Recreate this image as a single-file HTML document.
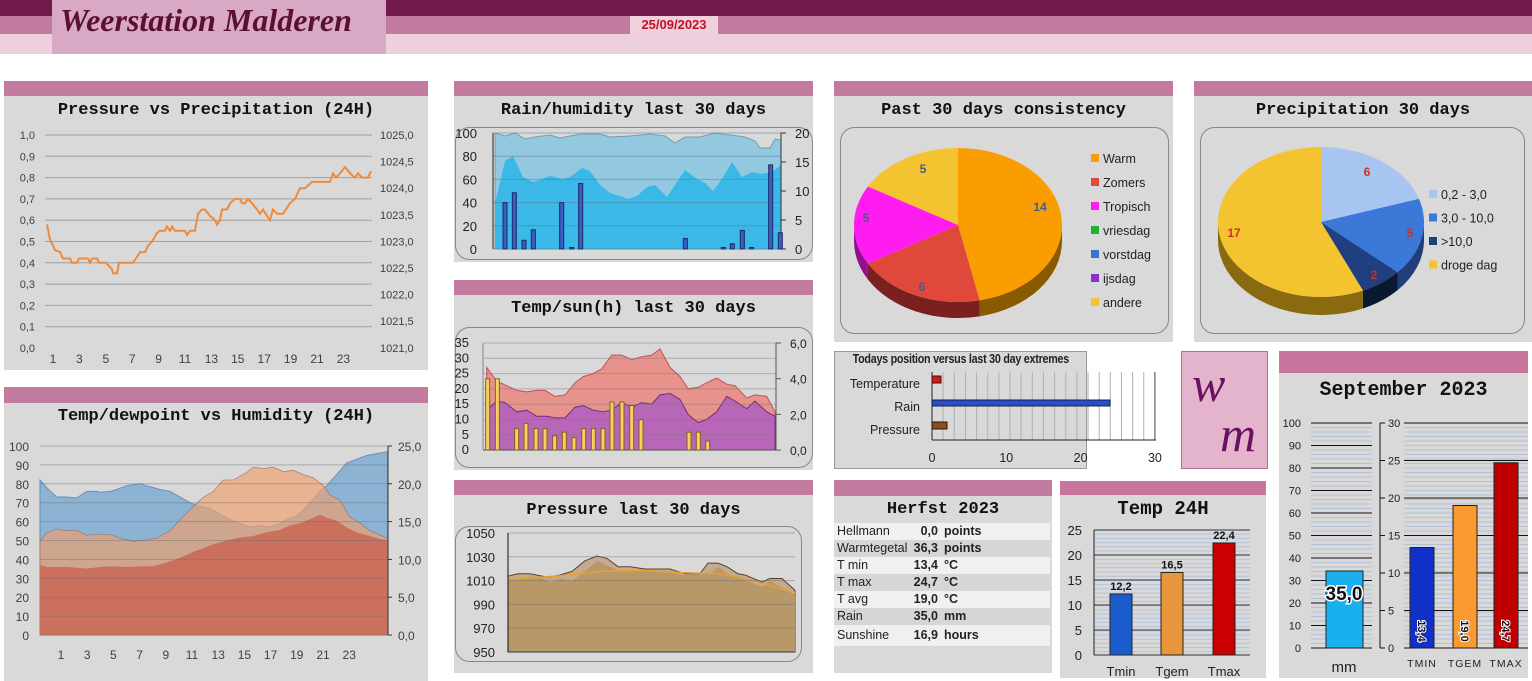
<!DOCTYPE html>
<html><head><meta charset="utf-8"><style>
*{margin:0;padding:0;box-sizing:border-box}
body{width:1532px;height:681px;background:#fff;position:relative;overflow:hidden;font-family:"Liberation Sans",sans-serif;color:#222}
.a{position:absolute}
.hd{position:absolute;background:#c27a9f}
.bd{position:absolute;background:#d9d9d9}
.t{position:absolute;font-family:"Liberation Mono",monospace;font-weight:bold;font-size:17px;text-align:center;color:#111}
svg{position:absolute;left:0;top:0}
svg text{font-family:"Liberation Sans",sans-serif}
</style></head><body>
<div class="a" style="left:0;top:0;width:1532px;height:16px;background:#731a4a"></div>
<div class="a" style="left:0;top:16px;width:1532px;height:18px;background:#c27a9f"></div>
<div class="a" style="left:0;top:34px;width:1532px;height:20px;background:#ecd0dd"></div>
<div class="a" style="left:52px;top:0;width:334px;height:54px;background:#d8a8c4"></div>
<div class="a" style="left:60px;top:2px;font-family:'Liberation Serif',serif;font-style:italic;font-weight:bold;font-size:32px;color:#5a1030">Weerstation Malderen</div>
<div class="a" style="left:630px;top:16px;width:88px;height:18px;background:#f0d0dc;color:#c0102a;font-weight:bold;font-size:13px;text-align:center;line-height:18px">25/09/2023</div>

<div class="hd" style="left:4px;top:81px;width:424px;height:15px"></div>
<div class="bd" style="left:4px;top:96px;width:424px;height:274px"></div>
<div class="t" style="left:4px;top:101px;width:424px">Pressure vs Precipitation (24H)</div>

<div class="hd" style="left:4px;top:387px;width:424px;height:16px"></div>
<div class="bd" style="left:4px;top:403px;width:424px;height:278px"></div>
<div class="t" style="left:4px;top:407px;width:424px">Temp/dewpoint vs Humidity (24H)</div>

<div class="hd" style="left:454px;top:81px;width:359px;height:15px"></div>
<div class="bd" style="left:454px;top:96px;width:359px;height:166px"></div>
<div class="t" style="left:454px;top:101px;width:359px">Rain/humidity last 30 days</div>

<div class="hd" style="left:454px;top:280px;width:359px;height:15px"></div>
<div class="bd" style="left:454px;top:295px;width:359px;height:175px"></div>
<div class="t" style="left:454px;top:299px;width:359px">Temp/sun(h) last 30 days</div>

<div class="hd" style="left:454px;top:480px;width:359px;height:15px"></div>
<div class="bd" style="left:454px;top:495px;width:359px;height:178px"></div>
<div class="t" style="left:454px;top:501px;width:359px">Pressure last 30 days</div>

<div class="hd" style="left:834px;top:81px;width:339px;height:15px"></div>
<div class="bd" style="left:834px;top:96px;width:339px;height:246px"></div>
<div class="t" style="left:834px;top:101px;width:339px">Past 30 days consistency</div>

<div class="hd" style="left:1194px;top:81px;width:338px;height:15px"></div>
<div class="bd" style="left:1194px;top:96px;width:338px;height:246px"></div>
<div class="t" style="left:1194px;top:101px;width:338px">Precipitation 30 days</div>

<div class="bd" style="left:834px;top:351px;width:253px;height:118px;border:1px solid #999"></div>
<div class="a" style="left:834px;top:352px;width:253px;text-align:center;font-weight:bold;font-size:12.5px;letter-spacing:-0.3px"><span style="display:inline-block;transform:scaleX(0.86)">Todays position versus last 30 day extremes</span></div>

<div class="a" style="left:1181px;top:351px;width:87px;height:118px;background:#e4b4cc;border:1px solid #b07090"></div>
<div class="a" style="left:1192px;top:355px;font-family:'Liberation Serif',serif;font-style:italic;font-size:50px;color:#6a1060">w</div>
<div class="a" style="left:1220px;top:405px;font-family:'Liberation Serif',serif;font-style:italic;font-size:50px;color:#6a1060">m</div>

<div class="hd" style="left:1279px;top:351px;width:249px;height:22px;background:#c9769e"></div>
<div class="bd" style="left:1279px;top:373px;width:249px;height:305px"></div>
<div class="t" style="left:1279px;top:379px;width:249px;font-size:20px">September 2023</div>

<div class="hd" style="left:834px;top:480px;width:218px;height:16px"></div>
<div class="bd" style="left:834px;top:496px;width:218px;height:177px"></div>
<div class="t" style="left:834px;top:500px;width:218px">Herfst 2023</div>

<div class="hd" style="left:1060px;top:481px;width:206px;height:14px;background:#c9769e"></div>
<div class="bd" style="left:1060px;top:495px;width:206px;height:183px"></div>
<div class="t" style="left:1060px;top:498px;width:206px;font-size:19px">Temp 24H</div>

<div id="herfst"></div>
<svg id="s" width="1532" height="681"></svg>
<script>
var S='';
function P(pts){return pts.map((p,i)=>(i?'L':'M')+p[0].toFixed(1)+','+p[1].toFixed(1)).join('')}
function A(pts,base){return P(pts)+'L'+pts[pts.length-1][0]+','+base+'L'+pts[0][0]+','+base+'Z'}
function T(x,y,s,o){o=o||{};S+=`<text x="${x}" y="${y}" font-size="${o.fs||11}" fill="${o.c||'#404040'}" text-anchor="${o.a||'start'}" ${o.w?'font-weight="bold"':''} ${o.x||''}>${s}</text>`}
function L(x1,y1,x2,y2,c,w){S+=`<line x1="${x1}" y1="${y1}" x2="${x2}" y2="${y2}" stroke="${c}" stroke-width="${w||1}"/>`}
function R(x,y,w,h,f,st){S+=`<rect x="${x}" y="${y}" width="${w}" height="${h}" fill="${f}" ${st?'stroke="'+st+'" stroke-width="1"':''}/>`}
// Pressure 24h
for(var i=0;i<=10;i++){var y=135+i*21.3;if(i<10)L(45,y,372,y,'#a0a0a0');T(35,y+4,(1-i/10).toFixed(1).replace('.',','),{a:'end'})}
for(var i=0;i<=8;i++){var y=135+i*26.6;T(380,y+4,(1025-i*0.5).toFixed(1).replace('.',','))}
for(var i=0;i<12;i++)T(53+i*26.4,363,2*i+1,{a:'middle',fs:12});
var pv=[[47,.58],[50,.51],[55,.46],[60,.45],[63,.42],[70,.42],[72,.40],[77,.40],[79,.42],[88,.42],[90,.40],[92,.42],[97,.42],[99,.40],[106,.40],[112,.37],[113,.35],[117,.35],[119,.40],[133,.40],[136,.42],[140,.45],[145,.45],[148,.48],[152,.50],[157,.54],[160,.55],[165,.55],[167,.57],[170,.55],[172,.57],[175,.55],[185,.55],[187,.53],[190,.55],[195,.55],[198,.63],[202,.65],[205,.65],[210,.62],[215,.60],[217,.58],[220,.60],[222,.65],[227,.65],[230,.68],[235,.70],[240,.70],[242,.68],[245,.68],[248,.70],[252,.68],[257,.65],[260,.63],[263,.65],[267,.62],[270,.60],[273,.65],[277,.63],[283,.63],[290,.68],[295,.70],[300,.75],[305,.75],[312,.78],[330,.78],[333,.82],[336,.80],[340,.82],[345,.85],[350,.82],[355,.80],[358,.82],[362,.80],[368,.80],[371,.83]];
S+=`<path d="${P(pv.map(p=>[p[0],348-p[1]*213]))}" fill="none" stroke="#ee8a3c" stroke-width="2"/>`;
// Temp/dew
var X=z=>z/3, HY=v=>635-v*1.89, TY=v=>635-v*7.56;
var hum=[[120,82],[140,78],[170,73],[200,73],[230,72.5],[260,76],[290,76],[300,75.5],[330,76],[350,77],[380,79],[420,80],[440,79],[460,78],[480,77],[510,76],[540,73],[570,70],[600,68],[630,67],[660,64],[690,61],[720,59],[750,57],[780,58],[800,57],[830,58],[860,61],[890,63],[910,66],[940,72],[960,76],[980,79],[1010,85],[1040,91],[1070,93],[1100,95],[1130,96],[1163,97]];
var tmp=[[120,12.4],[140,13.5],[170,14],[200,13.8],[230,13.8],[260,13.2],[290,13.3],[330,13.3],[360,12.8],[400,12.4],[430,12.5],[470,12.8],[510,13.8],[550,15.7],[580,17],[610,18.2],[640,19],[670,20.5],[700,20.5],[740,21.5],[760,22.2],[790,22],[820,22.2],[850,21.6],[880,21.8],[910,21.2],[940,20.8],[970,19.8],[990,18.5],[1020,17.8],[1050,15.6],[1080,14.8],[1110,13.8],[1140,13.2],[1163,12.8]];
var dew=[[120,9.3],[140,9],[200,9],[260,8.8],[300,9],[340,9.1],[380,9],[420,9.1],[460,9.1],[500,9.6],[540,10.2],[580,11],[610,11.5],[640,12],[680,12.5],[720,12.9],[760,13.1],[800,13.6],[840,13.9],[870,14.5],[900,14.8],[930,15.3],[960,15.9],[980,15.5],[1010,15.1],[1040,14.2],[1070,13.6],[1110,13.1],[1140,12.7],[1163,12.5]];
S+=`<path d="${A(hum.map(p=>[X(p[0]),HY(p[1])]),635)}" fill="#8cb2d4" stroke="#6a90b8"/>`;
S+=`<path d="${A(tmp.map(p=>[X(p[0]),TY(p[1])]),635)}" fill="rgba(238,160,110,0.68)" stroke="#a07060" stroke-width=".6"/>`;
S+=`<path d="${A(dew.map(p=>[X(p[0]),TY(p[1])]),635)}" fill="#cc705e"/>`;
for(var i=0;i<=10;i++){var y=446+i*18.9;L(40,y,388,y,'rgba(110,110,110,0.45)');T(29,y+5,100-i*10,{a:'end',fs:12})}
for(var i=0;i<=5;i++){var y=446+i*37.8;L(388,y,392,y,'#333');T(398,y+5,(25-i*5).toFixed(1).replace('.',','),{fs:12})}
L(388,446,388,635,'#333');
for(var i=0;i<12;i++)T(61+i*26.2,659,2*i+1,{a:'middle',fs:12});
// Rain/humidity box
S+=`<rect x="455.5" y="127.5" width="357" height="132" rx="14" fill="none" stroke="#888"/>`;
var rX=z=>450+z/3;
var hmax=[[495,133],[505,136],[515,133],[525,139],[535,137],[550,135],[560,138],[580,134],[600,134],[610,137],[630,136],[650,134],[665,136],[675,143],[685,137],[700,137],[715,133],[730,135],[745,137],[755,141],[760,148],[770,148],[775,139],[781,140]];
S+=`<path d="${A(hmax,249)}" fill="#92c9e0" stroke="#7a9aaa"/>`;
var hmin=[[495,203],[505,161],[513,156],[523,177],[533,182],[550,176],[563,179],[570,177],[582,168],[590,171],[600,185],[610,193],[620,196],[628,199],[637,196],[647,187],[655,185],[667,197],[685,170],[697,179],[705,183],[713,191],[722,179],[732,162],[742,177],[752,172],[762,174],[772,172],[781,165]];
S+=`<path d="${A(hmin,249)}" fill="#3ab8e8"/>`;
for(var i=0;i<=5;i++){var y=133+i*23.2;L(493,y,781,y,'rgba(90,120,140,0.5)');T(477,y+5,100-i*20,{a:'end',fs:13,c:'#222'})}
for(var i=0;i<=4;i++){var y=133+i*29;L(781,y,786,y,'#333');T(795,y+5,20-i*5,{fs:13,c:'#222'})}
L(493,133,493,249,'#222');L(781,133,781,249,'#333');
[[165,8],[193,9.7],[222,1.5],[250,3.3],[335,8],[365,.1],[392,11.3],[706,1.8],[820,.1],[847,.9],[877,3.2],[905,.1],[962,14.5],[991,2.8]].forEach(b=>{var h=Math.max(b[1]*5.8,1.5);R(rX(b[0])-2,249-h,4,h,'#3a5ec8','#1a2a60')});
// Temp/sun
S+=`<rect x="455.5" y="327.5" width="357" height="140" rx="14" fill="none" stroke="#888"/>`;
var TS=v=>450-v*3.06;
var tmax=[[110,27],[140,22.5],[170,21],[200,19.5],[230,19],[260,19.5],[285,19.5],[315,17.5],[345,18],[375,22],[400,24],[430,25],[455,26.5],[485,31],[515,31],[545,29.5],[575,30.5],[605,31],[630,33],[660,27],[690,24],[715,20],[745,20.5],[770,22],[800,23.5],[830,21.5],[855,21],[890,17],[915,18],[950,17.5],[975,12.5]];
var tmin=[[110,13],[140,16],[165,15.5],[200,12.5],[230,13],[260,11],[290,11],[315,10.5],[345,10.5],[375,14],[400,14.5],[430,13],[460,12.5],[485,13],[515,15.5],[545,14],[575,15.5],[605,15],[630,18],[660,18.5],[690,16.5],[715,11.5],[745,9],[770,10],[800,12.5],[830,17.5],[855,16],[890,13.5],[915,16],[950,12.5],[975,11]];
S+=`<path d="${A(tmax.map(p=>[rX(p[0]),TS(p[1])]),450)}" fill="#e8928c" stroke="#c05060"/>`;
S+=`<path d="${A(tmin.map(p=>[rX(p[0]),TS(p[1])]),450)}" fill="#b866b8" stroke="#7a2a7a"/>`;
for(var i=0;i<=7;i++){var y=343+i*15.3;L(483,y,776,y,'rgba(120,120,120,0.45)');T(469,y+4,35-i*5,{a:'end',fs:13,c:'#222'})}
for(var i=0;i<=3;i++){var y=343+i*35.7;L(776,y,781,y,'#555');T(790,y+5,(6-i*2).toFixed(1).replace('.',','),{fs:12,c:'#222'})}
L(483,343,483,450,'#888');L(776,343,776,450,'#555');L(483,450,776,450,'#555');
[[113,4],[142,4],[200,1.2],[228,1.5],[258,1.2],[285,1.2],[314,.8],[343,1],[372,.7],[401,1.2],[430,1.2],[459,1.2],[486,2.7],[516,2.7],[545,2.5],[573,1.7],[717,1],[745,1],[773,.5]].forEach(b=>{var h=b[1]*17.8;R(rX(b[0])-2,450-h,4,h,'#f8d060','#806020')});
// Pressure 30
S+=`<rect x="455.5" y="526.5" width="346" height="135" rx="14" fill="none" stroke="#888"/>`;
var PY=p=>652-(p-950)*1.185;
var pmax=[[508,1014],[518,1016],[530,1016],[548,1013],[560,1015],[572,1018],[585,1027],[597,1031],[607,1029],[618,1022],[630,1022],[645,1020],[670,1020],[685,1016],[700,1016],[708,1025],[718,1025],[727,1022],[738,1016],[745,1015],[762,1009],[770,1012],[782,1012],[795,1002]];
var pmin=[[508,1012],[520,1011],[530,1014],[540,1013],[550,1009],[560,1012],[572,1010],[585,1018],[597,1027],[607,1023],[618,1019],[640,1019],[660,1018],[685,1015],[700,1015],[712,1017],[718,1022],[727,1016],[745,1011],[762,1005],[770,1010],[782,1004],[795,998]];
S+=`<path d="${A(pmax.map(p=>[p[0],PY(p[1])]),652)}" fill="#c4ab90" stroke="#5a4030"/>`;
S+=`<path d="${A(pmin.map(p=>[p[0],PY(p[1])]),652)}" fill="#b89868"/>`;
S+=`<path d="${P([[508,1011],[540,1013],[570,1015],[600,1018],[640,1019],[680,1017],[720,1016],[745,1012],[770,1006],[795,1000]].map(p=>[p[0],PY(p[1])]))}" fill="none" stroke="#e8a030" stroke-width="1.5"/>`;
for(var i=0;i<=5;i++){var y=533+i*23.8;if(i<5)L(508,y,795,y,'rgba(110,110,110,0.45)');T(495,y+5,1050-i*20,{a:'end',fs:13,c:'#222'})}
L(508,533,508,652,'#111');L(508,652,795,652,'#333');
// Pies
function pt(cx,cy,rx,ry,a){a=a*Math.PI/180;return[cx+rx*Math.sin(a),cy-ry*Math.cos(a)]}
function pie(cx,cy,rx,ry,dep,sl){
 var tot=sl.reduce((s,x)=>s+x[0],0),a=0,parts=[];
 sl.forEach(s=>{var b=a+s[0]/tot*360;parts.push([a,b,s]);a=b});
 parts.forEach(p=>{
  var a0=Math.max(p[0],90),a1=Math.min(p[1],270);if(a1<=a0)return;
  var p0=pt(cx,cy,rx,ry,a0),p1=pt(cx,cy,rx,ry,a1);
  S+=`<path d="M${p0}A${rx},${ry} 0 0 1 ${p1}L${p1[0]},${p1[1]+dep}A${rx},${ry} 0 0 0 ${p0[0]},${p0[1]+dep}Z" fill="${p[2][2]}"/>`;});
 parts.forEach(p=>{var p0=pt(cx,cy,rx,ry,p[0]),p1=pt(cx,cy,rx,ry,p[1]);
  S+=`<path d="M${cx},${cy}L${p0}A${rx},${ry} 0 ${p[1]-p[0]>180?1:0} 1 ${p1}Z" fill="${p[2][1]}"/>`;});
}
S+=`<rect x="840.5" y="127.5" width="328" height="206" rx="14" fill="none" stroke="#888"/>`;
pie(958,225,104,77,16,[[14,'#fa9d00','#8a5a00'],[6,'#e0483c','#7a2020'],[5,'#ff1cf0','#901090'],[5,'#f4c330','#8a6a10']]);
T(1040,211,'14',{fs:12,w:1,c:'#4a5a8a',a:'middle'});T(922,291,'6',{fs:12,w:1,c:'#4a5a8a',a:'middle'});T(866,222,'5',{fs:12,w:1,c:'#4a5a8a',a:'middle'});T(923,173,'5',{fs:12,w:1,c:'#4a5a8a',a:'middle'});
[['Warm','#fa9d00'],['Zomers','#e0483c'],['Tropisch','#ff1cf0'],['vriesdag','#20b030'],['vorstdag','#4070d0'],['ijsdag','#8a30d0'],['andere','#f4c330']].forEach((l,i)=>{var y=159+i*24;R(1091,y-5,8,8,l[1]);T(1103,y+4,l[0],{fs:12.5,c:'#222'})});
S+=`<rect x="1200.5" y="127.5" width="324" height="206" rx="14" fill="none" stroke="#888"/>`;
pie(1321,222,103,75,18,[[6,'#a8c4f0','#6a80a0'],[5,'#3c78d8','#203e78'],[2,'#1f3f80','#0a1830'],[17,'#f4c330','#8a6a10']]);
T(1367,176,'6',{fs:12,w:1,c:'#d03020',a:'middle'});T(1410,237,'5',{fs:12,w:1,c:'#d03020',a:'middle'});T(1374,279,'2',{fs:12,w:1,c:'#d03020',a:'middle'});T(1234,237,'17',{fs:12,w:1,c:'#d03020',a:'middle'});
[['0,2 - 3,0','#a8c4f0'],['3,0 - 10,0','#3c78d8'],['&gt;10,0','#1f3f80'],['droge dag','#f4c330']].forEach((l,i)=>{var y=195+i*23.5;R(1429,y-5,8,8,l[1]);T(1441,y+4,l[0],{fs:12.5,c:'#222'})});
// Todays position
for(var i=0;i<=30;i+=1.5){var x=932+i*7.43;L(x,372,x,440,i%10==0?'#444':'#b0b0b8')}
L(932,440,1156,440,'#222');L(932,372,932,440,'#222');
R(932,376,9,7,'#c81e1e','#600');R(932,400,178,6,'#2a4fc0','#102060');R(932,422,15,7,'#7a5a10','#402');
[[0],[10],[20],[30]].forEach(v=>T(932+v[0]*7.43,462,v[0],{a:'middle',fs:12.5,c:'#222'}));
T(920,388,'Temperature',{a:'end',fs:12.5,c:'#222'});T(920,411,'Rain',{a:'end',fs:12.5,c:'#222'});T(920,434,'Pressure',{a:'end',fs:12.5,c:'#222'});
// Temp 24H
for(var y=530;y<655;y+=4.2)L(1094,y,1250,y,'#b4c4dc');
for(var i=0;i<=5;i++){var y=530+i*25;L(1094,y,1250,y,'#333');T(1082,y+5,25-i*5,{a:'end',fs:13,c:'#222'})}
L(1094,530,1094,655,'#222');
[[1110,12.2,'#1a5ccc','Tmin'],[1161,16.5,'#e8963c','Tgem'],[1213,22.4,'#cc0000','Tmax']].forEach(b=>{var h=b[1]*5;R(b[0],655-h,22,h,b[2],'#222');T(b[0]+11,651-h,b[1].toFixed(1).replace('.',','),{a:'middle',fs:11,c:'#111',w:1});T(b[0]+11,676,b[3],{a:'middle',fs:13,c:'#222'})});
// September
for(var y=423;y<648;y+=4.5){L(1311,y,1372,y,'#b4c0d8');L(1404,y,1528,y,'#b4c0d8')}
for(var i=0;i<=10;i++){var y=423+i*22.5;L(1311,y,1372,y,'#111');T(1301,y+4,100-i*10,{a:'end',fs:11,c:'#222'})}
for(var i=0;i<=6;i++){var y=423+i*37.5;L(1380,y,1385,y,'#111');L(1404,y,1528,y,'#111');T(1388,y+4,30-i*5,{fs:11,c:'#222'})}
L(1380,423,1380,648,'#111');
R(1326,571,37,77,'#1ab0ee','#222');T(1344,600,'35,0',{a:'middle',fs:19,w:1,c:'#111',x:'stroke="#fff" stroke-width="3" paint-order="stroke"'});
T(1344,672,'mm',{a:'middle',fs:15,c:'#222'});
[[1410,13.4,'#1030c8','TMIN'],[1453,19.0,'#fa9a30','TGEM'],[1494,24.7,'#c00000','TMAX']].forEach(b=>{var h=b[1]*7.5;R(b[0],648-h,24,h,b[2],'#222');S+=`<text transform="translate(${b[0]+8},631) rotate(90)" font-size="11" font-weight="bold" fill="#111" stroke="#fff" stroke-width="2" paint-order="stroke" text-anchor="middle">${b[1].toFixed(1).replace('.',',')}</text>`;T(b[0]+12,667,b[3],{a:'middle',fs:10.5,c:'#222',x:'letter-spacing="1"'})});
document.getElementById('s').innerHTML=S;
// Herfst table
var rows=[['Hellmann','0,0','points'],['Warmtegetal','36,3','points'],['T min','13,4','°C'],['T max','24,7','°C'],['T avg','19,0','°C'],['Rain','35,0','mm'],['Sunshine','16,9','hours']];
var h='',y=523;rows.forEach((r,i)=>{var hh=i==6?21:17;h+=`<div class="a" style="left:834px;top:${y}px;width:216px;height:${hh}px;background:${i%2?'#d6d6d6':'#f0f0f0'};font-size:12.5px;line-height:${hh}px"><span class="a" style="left:3px">${r[0]}</span><span class="a" style="right:112px;font-weight:bold">${r[1]}</span><span class="a" style="left:110px;font-weight:bold">${r[2]}</span></div>`;y+=hh});
document.getElementById('herfst').innerHTML=h;
</script>
</body></html>
